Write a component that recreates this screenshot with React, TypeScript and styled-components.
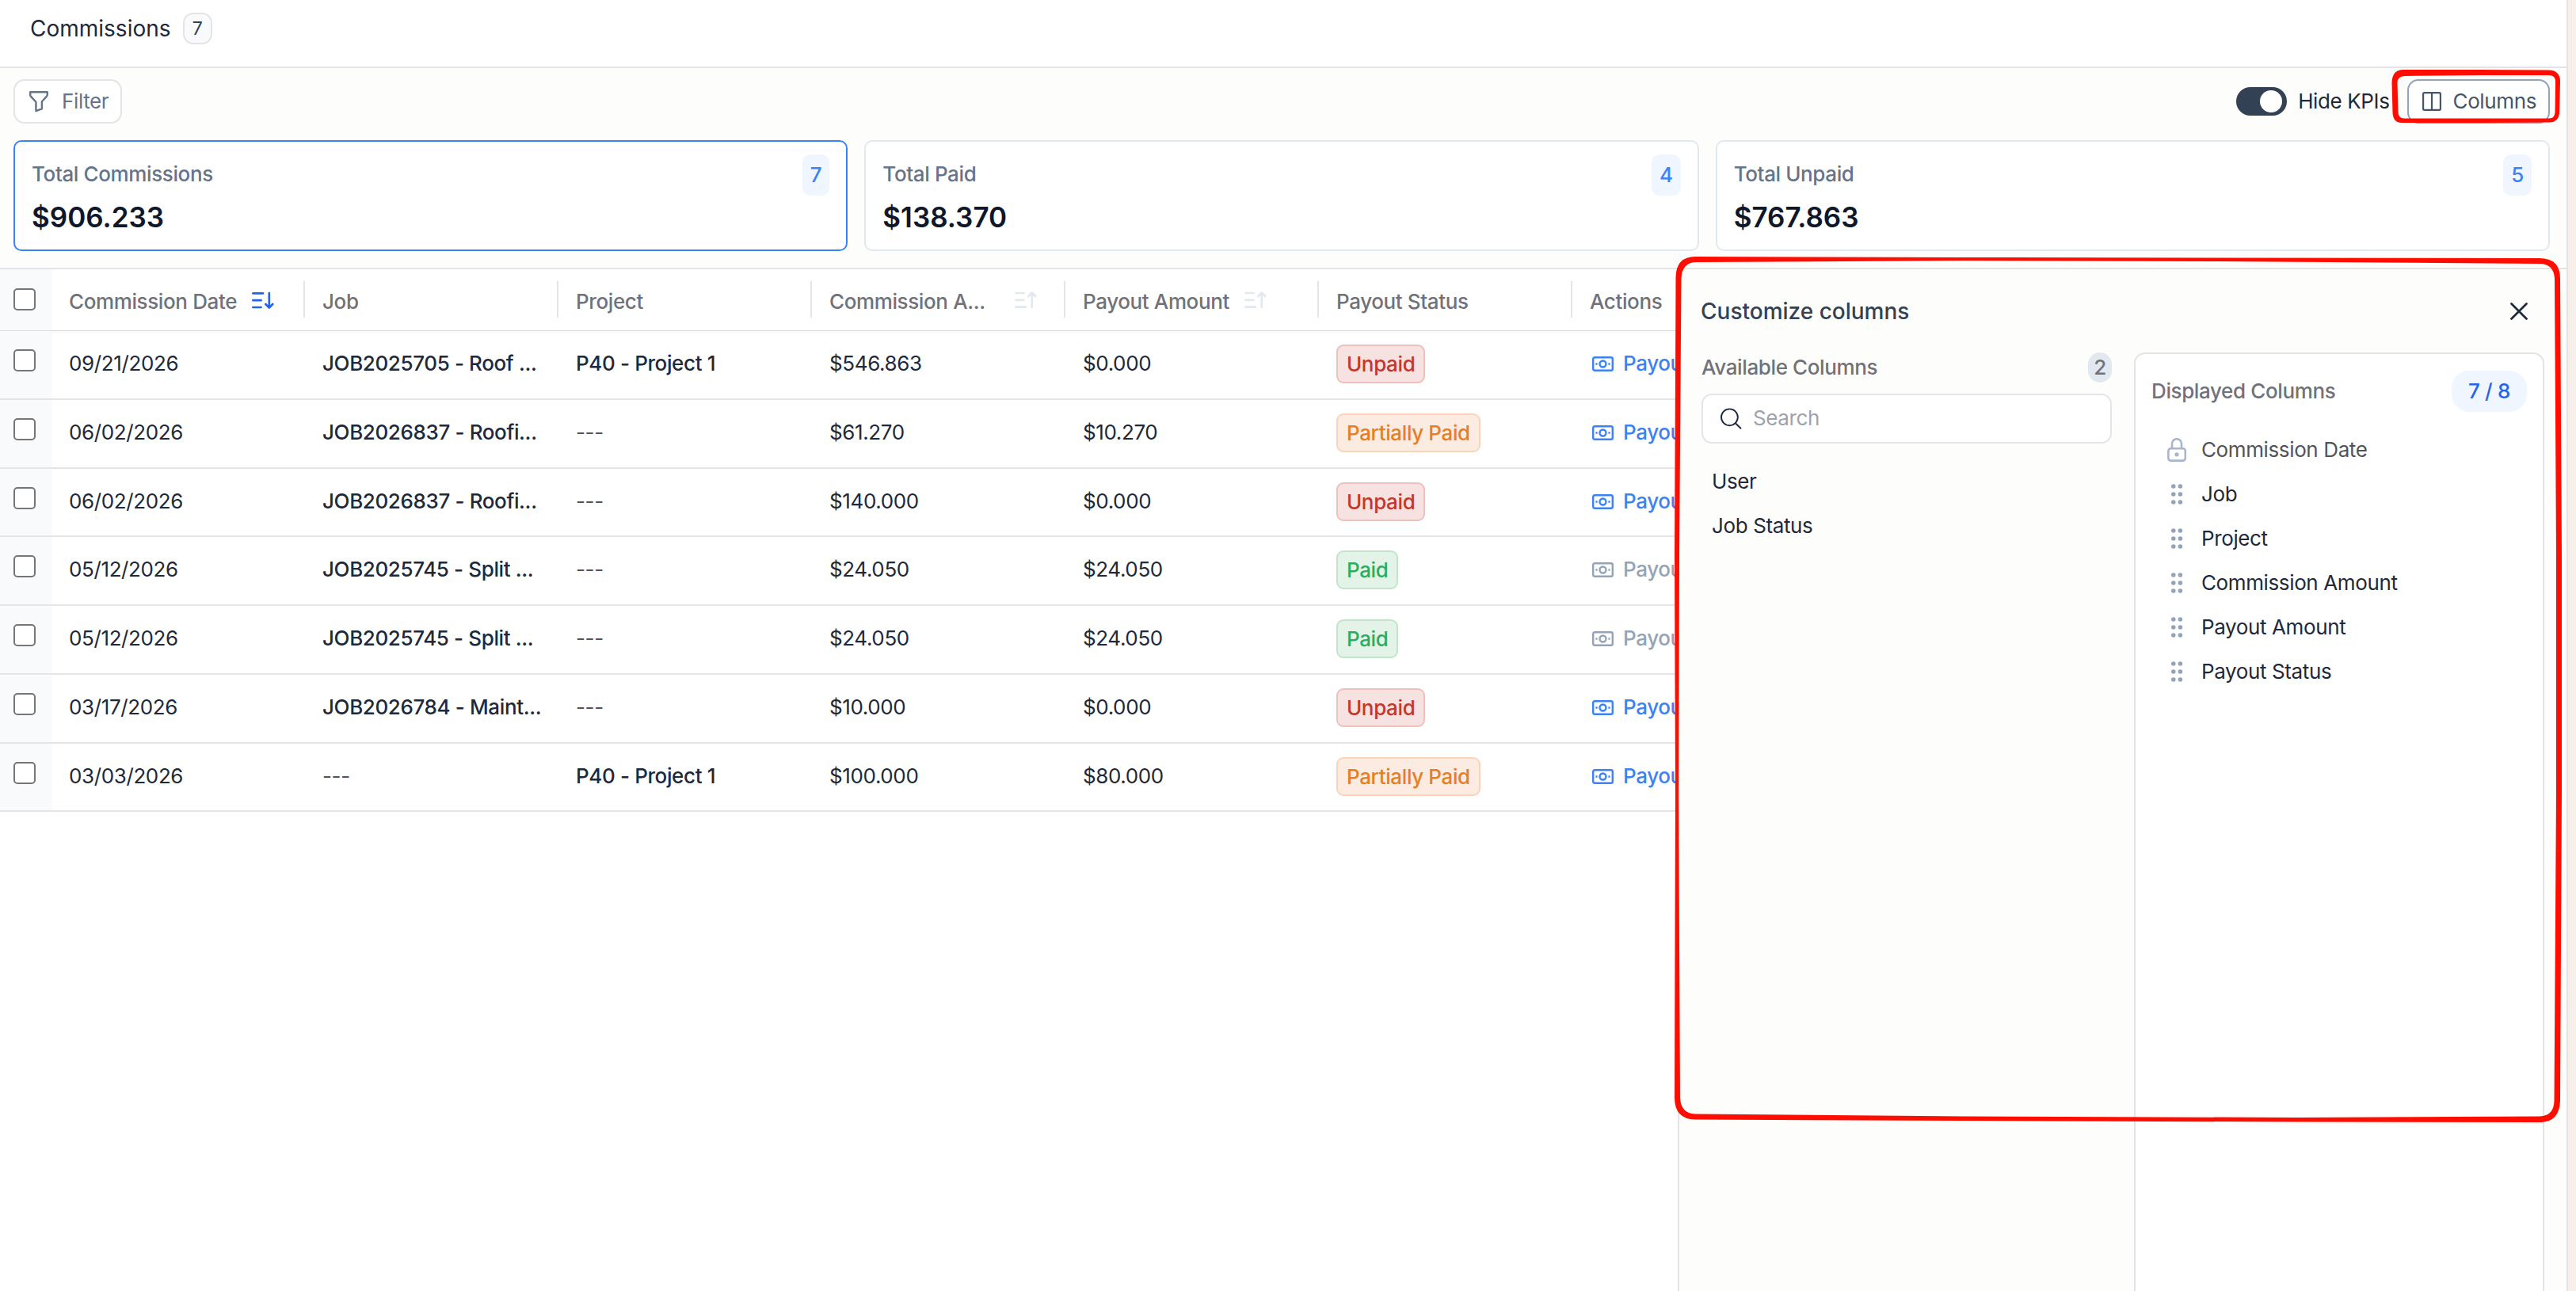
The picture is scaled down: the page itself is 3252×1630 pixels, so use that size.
import * as React from 'react';
import styled, { createGlobalStyle, css } from 'styled-components';

const GlobalStyle = createGlobalStyle`
  * {
    box-sizing: border-box;
  }

  body {
    margin: 0;
    background: #f7f0ea;
    font-family: Inter, 'Liberation Sans', sans-serif;
    font-size: 26px;
    font-optical-sizing: none;
    letter-spacing: -0.38px;
    line-height: 38px;
    color: #1e293b;
  }
`;

const Page = styled.div`
  position: relative;
  width: 3252px;
  height: 1630px;
  padding-right: 10px;
  overflow: hidden;
`;

const Main = styled.main`
  display: flex;
  flex-direction: column;
  height: 100%;
  border-right: 2px solid #e4e4e7;
  background: #fdfdfb;
`;

const Header = styled.header`
  display: flex;
  align-items: flex-start;
  gap: 15px;
  height: 86px;
  padding: 16px 38px 0;
  border-bottom: 2px solid #e4e4e7;
  background: #fff;
`;

const Title = styled.h1`
  margin: 0;
  font-size: 28px;
  letter-spacing: 0;
  line-height: 40px;
  font-weight: 400;
`;

const HeaderCount = styled.span`
  width: 37px;
  height: 40px;
  border: 2px solid #e4e4e7;
  border-radius: 13px;
  background: #f8fafc;
  color: #334155;
  font-size: 23px;
  line-height: 36px;
  text-align: center;
`;

const Toolbar = styled.div`
  display: flex;
  align-items: center;
  justify-content: space-between;
  padding: 14px 21px 0 17px;
`;

const ToolbarGroup = styled.div`
  display: flex;
  align-items: center;
`;

const ToolbarButton = styled.button<{ $active?: boolean }>`
  display: flex;
  align-items: center;
  height: 56px;
  padding: 0 15px 0 17px;
  border: 2px solid ${(props): string => (props.$active ? '#94a3b8' : '#e4e4e7')};
  border-radius: 14px;
  background: #fff;
  color: ${(props): string => (props.$active ? '#475569' : '#64748b')};
  font: inherit;
  letter-spacing: inherit;

  svg {
    margin-right: ${(props): string => (props.$active ? '15px' : '16px')};
  }
`;

const Switch = styled.span`
  display: flex;
  justify-content: flex-end;
  width: 64px;
  height: 36px;
  padding: 4px 6px;
  border-radius: 18px;
  background: #334155;

  &::after {
    content: '';
    width: 28px;
    height: 28px;
    border-radius: 50%;
    background: #fff;
  }
`;

const SwitchLabel = styled.span`
  margin: 0 22px 0 14px;
`;

const Kpis = styled.section`
  display: grid;
  grid-template-columns: repeat(3, 1fr);
  gap: 21px;
  padding: 21px 21px 21px 17px;
`;

const KpiCard = styled.div<{ $active?: boolean }>`
  display: flex;
  justify-content: space-between;
  align-items: flex-start;
  height: 140px;
  padding: 16px 21px;
  border: 2px solid ${(props): string => (props.$active ? '#3b82f6' : '#e2e8f0')};
  border-radius: 10px;
  background: #fff;
`;

const KpiLabel = styled.div`
  margin-top: 6px;
  color: #64748b;
  font-weight: 500;
`;

const KpiValue = styled.div`
  margin-top: 13px;
  color: #0f172a;
  font-size: 35px;
  letter-spacing: 0;
  line-height: 44px;
  font-weight: 600;
`;

const KpiCount = styled.span`
  height: 52px;
  padding: 0 10px;
  border-radius: 10px;
  background: #eff6ff;
  color: #3b82f6;
  line-height: 52px;
  font-weight: 500;
`;

const Content = styled.section`
  position: relative;
  flex: 1;
  border-top: 2px solid #e4e4e7;
  background: #fff;
`;

const gridRow = css`
  display: grid;
  grid-template-columns: 66px repeat(7, 320px);
  width: 2306px;
`;

const Clip = styled.div`
  overflow: hidden;
`;

const HeadRow = styled.div`
  ${gridRow}
  height: 78px;
  border-bottom: 1px solid #d9dce5;
  box-shadow: 0 2px 4px rgba(15, 23, 42, 0.03);
`;

const Row = styled.div`
  ${gridRow}
  height: 86.75px;
  border-bottom: 2px solid #e4e4e9;
`;

const CheckCell = styled.div<{ $head?: boolean }>`
  padding: ${(props): string => (props.$head ? '24px' : '23px')} 0 0 17px;
  background: #f8fafc;
`;

const Checkbox = styled.span`
  display: block;
  width: 28px;
  height: 28px;
  border: 2px solid #767676;
  border-radius: 5px;
  background: #fff;
`;

const HeadCell = styled.div`
  display: flex;
  padding: 15px 1px 16px 21px;
`;

const HeadLabel = styled.span<{ $cut?: boolean }>`
  width: ${(props): string => (props.$cut ? '215px' : 'auto')};
  margin: 7px 19px 0 0;
  color: #71717a;
  font-weight: 500;
  white-space: nowrap;
`;

const SortIcon = styled.svg`
  flex: none;
  margin-top: 13px;
`;

const Divider = styled.span`
  width: 2px;
  height: 46px;
  margin-left: auto;
  background: #e4e4e7;
`;

const Cell = styled.div<{ $strong?: boolean; $muted?: boolean }>`
  padding: 22px 0 0 21px;
  color: ${(props): string => (props.$muted ? '#52525b' : '#1e293b')};
  font-weight: ${(props): string => (props.$strong ? '500' : '400')};
  white-space: nowrap;
`;

const BadgeCell = styled.div`
  padding: 17px 21px 0;
`;

const palette = {
  Unpaid: { color: '#c0392b', border: '#efbfbc', background: '#f6e2e1' },
  'Partially Paid': { color: '#e67e22', border: '#fad4b8', background: '#fcebe1' },
  Paid: { color: '#27ae60', border: '#bfe5cb', background: '#e3f3e7' },
};

type Status = keyof typeof palette;

const Badge = styled.span<{ $status: Status }>`
  display: inline-block;
  height: 49px;
  padding: 0 11px;
  border: 2px solid ${(props): string => palette[props.$status].border};
  border-radius: 9px;
  background: ${(props): string => palette[props.$status].background};
  color: ${(props): string => palette[props.$status].color};
  line-height: 45px;
  font-weight: 500;
`;

const PayoutLink = styled.div<{ $disabled?: boolean }>`
  display: flex;
  align-items: flex-start;
  gap: 12px;
  padding: 22px 0 0 24px;
  color: ${(props): string => (props.$disabled ? '#94a3b8' : '#3b82f6')};
  font-weight: 500;

  svg {
    margin-top: 10px;
  }
`;

const Drawer = styled.aside`
  position: absolute;
  top: 0;
  right: 0;
  bottom: 0;
  display: flex;
  flex-direction: column;
  width: 1122px;
  padding: 32px 28px 0;
  border-left: 2px solid #e4e4e7;
  background: #fdfdfb;
`;

const DrawerHeader = styled.div`
  display: flex;
  align-items: center;
  justify-content: space-between;
  height: 42px;
  padding-right: 21px;
`;

const DrawerTitle = styled.h2`
  margin: 0;
  margin-left: -1px;
  color: #334155;
  font-size: 28px;
  letter-spacing: 0;
  font-weight: 500;
`;

const DrawerBody = styled.div`
  display: grid;
  grid-template-columns: 518px 518px;
  gap: 28px;
  flex: 1;
  padding-top: 31px;
`;

const PanelHead = styled.div`
  display: flex;
  align-items: center;
  justify-content: space-between;
  color: #71717a;
  font-weight: 500;
`;

const CountBubble = styled.span`
  width: 30px;
  height: 38px;
  border-radius: 15px;
  background: #e2e8f0;
  text-align: center;
`;

const SearchBox = styled.div`
  display: flex;
  align-items: center;
  gap: 14px;
  height: 63px;
  margin-top: 14px;
  padding: 0 22px 1px;
  border: 2px solid #e4e4e9;
  border-radius: 13px;
  background: #fff;
  color: #9ca3af;
`;

const AvailableList = styled.div`
  padding: 20px 13px;
`;

const Available = styled.div`
  line-height: 56px;
`;

const Displayed = styled.div`
  padding: 21px 20px 0;
  border: 2px solid #e4e4e7;
  border-bottom: 0;
  border-radius: 14px 14px 0 0;
  background: #fff;
`;

const Ratio = styled.span`
  width: 95px;
  height: 52px;
  border-radius: 22px;
  background: #eff6ff;
  color: #2563eb;
  line-height: 52px;
  text-align: center;
`;

const DisplayedList = styled.div`
  padding: 20px 18px;
`;

const DisplayedItem = styled.div<{ $locked?: boolean }>`
  display: flex;
  align-items: center;
  gap: 17px;
  height: 56px;
  color: ${(props): string => (props.$locked ? '#52525b' : '#1e293b')};
`;

const Markup = styled.svg`
  position: absolute;
  top: 0;
  left: 0;
  pointer-events: none;
`;

const FilterIcon = (): React.ReactElement => (
  <svg width="26" height="28" viewBox="0 0 26 28" fill="none" stroke="currentColor" strokeWidth="2.4" strokeLinejoin="round">
    <path d="M2.2 2.2h21.6v3.3a3 3 0 0 1-.9 2.1l-6 6.6v9.2l-7.5 2.8V14.8L3 7.9a3 3 0 0 1-.8-2z" />
  </svg>
);

const ColumnsIcon = (): React.ReactElement => (
  <svg width="24" height="24" viewBox="0 0 24 24" fill="none" stroke="currentColor" strokeWidth="2.2">
    <rect x="1.1" y="1.1" width="21.8" height="21.8" rx="1.6" />
    <path d="M12 1v22" />
  </svg>
);

const Sort = ({ active }: { active?: boolean }): React.ReactElement => (
  <SortIcon
    width="28"
    height="22"
    viewBox="0 0 28 22"
    fill="none"
    stroke={active ? '#2563eb' : '#e2e8f0'}
    strokeWidth="2.7"
    strokeLinecap="round"
    strokeLinejoin="round"
  >
    {active ? (
      <path d="M1.4 2.4h12.6M1.4 11.2h10.2M1.4 20h10.2M21.8 2v18.4M17.4 16l4.4 4.6 4.4-4.6" />
    ) : (
      <path d="M1.4 2h10.2M1.4 10.8h10.2M1.4 19.6h12.6M21.8 20V1.6M17.4 6l4.4-4.6L26.2 6" />
    )}
  </SortIcon>
);

const CashIcon = (): React.ReactElement => (
  <svg width="27" height="19" viewBox="0 0 27 19" fill="none" stroke="currentColor" strokeWidth="2.4">
    <rect x="1.2" y="1.2" width="24.6" height="16.6" rx="2" />
    <circle cx="13.5" cy="9.5" r="4" />
    <path d="M4.4 9.5h2.2M20.4 9.5h2.2" />
  </svg>
);

const SearchIcon = (): React.ReactElement => (
  <svg width="27" height="27" viewBox="0 0 27 27" fill="none" stroke="#1e293b" strokeWidth="1.9">
    <circle cx="11.4" cy="11.8" r="10.4" />
    <path d="M18.8 19.2l7.2 7" />
  </svg>
);

const CloseIcon = (): React.ReactElement => (
  <svg width="22" height="22" viewBox="0 0 22 22" stroke="#1e293b" strokeWidth="2.7" strokeLinecap="round">
    <path d="M1.5 1.5l19 19M20.5 1.5l-19 19" />
  </svg>
);

const LockIcon = (): React.ReactElement => (
  <svg width="28" height="30" viewBox="0 0 28 30" fill="none" stroke="#a9b5ca" strokeWidth="2.6">
    <rect x="3.4" y="13.2" width="21.4" height="15.4" rx="3" />
    <path d="M8 13V7.2a6 6 0 0 1 12 0V13" />
    <circle cx="14" cy="20.8" r="2.6" fill="#a9b5ca" stroke="none" />
  </svg>
);

const DragIcon = (): React.ReactElement => (
  <svg width="28" height="28" viewBox="0 0 28 28" fill="#94a3b8">
    {[4, 14, 24].map(y => (
      <React.Fragment key={y}>
        <circle cx="9.8" cy={y} r="2.8" />
        <circle cx="18.4" cy={y} r="2.8" />
      </React.Fragment>
    ))}
  </svg>
);

const kpis = [
  { label: 'Total Commissions', value: '$906.233', count: 7 },
  { label: 'Total Paid', value: '$138.370', count: 4 },
  { label: 'Total Unpaid', value: '$767.863', count: 5 },
];

const columns: { label: string; sort?: 'active' | 'idle'; cut?: boolean }[] = [
  { label: 'Commission Date', sort: 'active' },
  { label: 'Job' },
  { label: 'Project' },
  { label: 'Commission A...', sort: 'idle', cut: true },
  { label: 'Payout Amount', sort: 'idle' },
  { label: 'Payout Status' },
  { label: 'Actions' },
];

const NONE = '---';

const rows: { date: string; job: string; project: string; amount: string; payout: string; status: Status }[] = [
  { date: '09/21/2026', job: 'JOB2025705 - Roof ...', project: 'P40 - Project 1', amount: '$546.863', payout: '$0.000', status: 'Unpaid' },
  { date: '06/02/2026', job: 'JOB2026837 - Roofi...', project: NONE, amount: '$61.270', payout: '$10.270', status: 'Partially Paid' },
  { date: '06/02/2026', job: 'JOB2026837 - Roofi...', project: NONE, amount: '$140.000', payout: '$0.000', status: 'Unpaid' },
  { date: '05/12/2026', job: 'JOB2025745 - Split ...', project: NONE, amount: '$24.050', payout: '$24.050', status: 'Paid' },
  { date: '05/12/2026', job: 'JOB2025745 - Split ...', project: NONE, amount: '$24.050', payout: '$24.050', status: 'Paid' },
  { date: '03/17/2026', job: 'JOB2026784 - Maint...', project: NONE, amount: '$10.000', payout: '$0.000', status: 'Unpaid' },
  { date: '03/03/2026', job: NONE, project: 'P40 - Project 1', amount: '$100.000', payout: '$80.000', status: 'Partially Paid' },
];

const displayed = ['Job', 'Project', 'Commission Amount', 'Payout Amount', 'Payout Status'];

const App = (): React.ReactElement => (
  <Page>
    <GlobalStyle />
    <Main>
      <Header>
        <Title>Commissions</Title>
        <HeaderCount>7</HeaderCount>
      </Header>
      <Toolbar>
        <ToolbarButton>
          <FilterIcon />
          Filter
        </ToolbarButton>
        <ToolbarGroup>
          <Switch />
          <SwitchLabel>Hide KPIs</SwitchLabel>
          <ToolbarButton $active>
            <ColumnsIcon />
            Columns
          </ToolbarButton>
        </ToolbarGroup>
      </Toolbar>
      <Kpis>
        {kpis.map((kpi, index) => (
          <KpiCard key={kpi.label} $active={index === 0}>
            <div>
              <KpiLabel>{kpi.label}</KpiLabel>
              <KpiValue>{kpi.value}</KpiValue>
            </div>
            <KpiCount>{kpi.count}</KpiCount>
          </KpiCard>
        ))}
      </Kpis>
      <Content>
        <Clip>
          <HeadRow>
            <CheckCell $head>
              <Checkbox />
            </CheckCell>
            {columns.map(column => (
              <HeadCell key={column.label}>
                <HeadLabel $cut={column.cut}>{column.label}</HeadLabel>
                {column.sort && <Sort active={column.sort === 'active'} />}
                <Divider />
              </HeadCell>
            ))}
          </HeadRow>
          {rows.map((row, index) => (
            <Row key={index}>
              <CheckCell>
                <Checkbox />
              </CheckCell>
              <Cell>{row.date}</Cell>
              <Cell $strong={row.job !== NONE} $muted={row.job === NONE}>
                {row.job}
              </Cell>
              <Cell $strong={row.project !== NONE} $muted={row.project === NONE}>
                {row.project}
              </Cell>
              <Cell>{row.amount}</Cell>
              <Cell>{row.payout}</Cell>
              <BadgeCell>
                <Badge $status={row.status}>{row.status}</Badge>
              </BadgeCell>
              <PayoutLink $disabled={row.status === 'Paid'}>
                <CashIcon />
                Payout
              </PayoutLink>
            </Row>
          ))}
        </Clip>
        <Drawer>
          <DrawerHeader>
            <DrawerTitle>Customize columns</DrawerTitle>
            <CloseIcon />
          </DrawerHeader>
          <DrawerBody>
            <div>
              <PanelHead>
                Available Columns
                <CountBubble>2</CountBubble>
              </PanelHead>
              <SearchBox>
                <SearchIcon />
                Search
              </SearchBox>
              <AvailableList>
                <Available>User</Available>
                <Available>Job Status</Available>
              </AvailableList>
            </div>
            <Displayed>
              <PanelHead>
                Displayed Columns
                <Ratio>7 / 8</Ratio>
              </PanelHead>
              <DisplayedList>
                <DisplayedItem $locked>
                  <LockIcon />
                  Commission Date
                </DisplayedItem>
                {displayed.map(label => (
                  <DisplayedItem key={label}>
                    <DragIcon />
                    {label}
                  </DisplayedItem>
                ))}
              </DisplayedList>
            </Displayed>
          </DrawerBody>
        </Drawer>
      </Content>
    </Main>
    <Markup width="3252" height="1630" fill="#ff0d00" fillRule="evenodd">
      <path d="M3034 88L3130 88L3218 88.500Q3232 89 3232 103L3231 143Q3230 154 3219 154.500L3130 155L3032 155Q3021 155 3020.500 142L3019.500 104Q3020 88 3034 88ZM3036 96Q3027 96 3026.500 104L3027.500 142Q3028 149.500 3035 149.500L3130 149.500L3218 149.500Q3225 149.500 3225.500 142L3226 103Q3226 95 3218 95L3130 95Z" />
      <path d="M2140 324L2480 325L2800 325.500L3206 326Q3232 326 3232 352L3234 700L3234 1000L3232 1390Q3231 1416 3208 1417L2900 1416.500L2480 1415L2140 1413.500Q2114 1413 2114 1386L2115 1000L2114 700L2115.500 350Q2116 324 2140 324ZM2142 331Q2123 331 2122.500 352L2120 700L2119 1000L2121 1386Q2122 1406 2140 1406.500L2480 1409.500L2900 1411L3206 1409.500Q3224 1409 3224.500 1390L3227 1000L3227 700L3225 352Q3224 333 3206 333L2800 330L2480 329Z" />
    </Markup>
  </Page>
);

export default App;
